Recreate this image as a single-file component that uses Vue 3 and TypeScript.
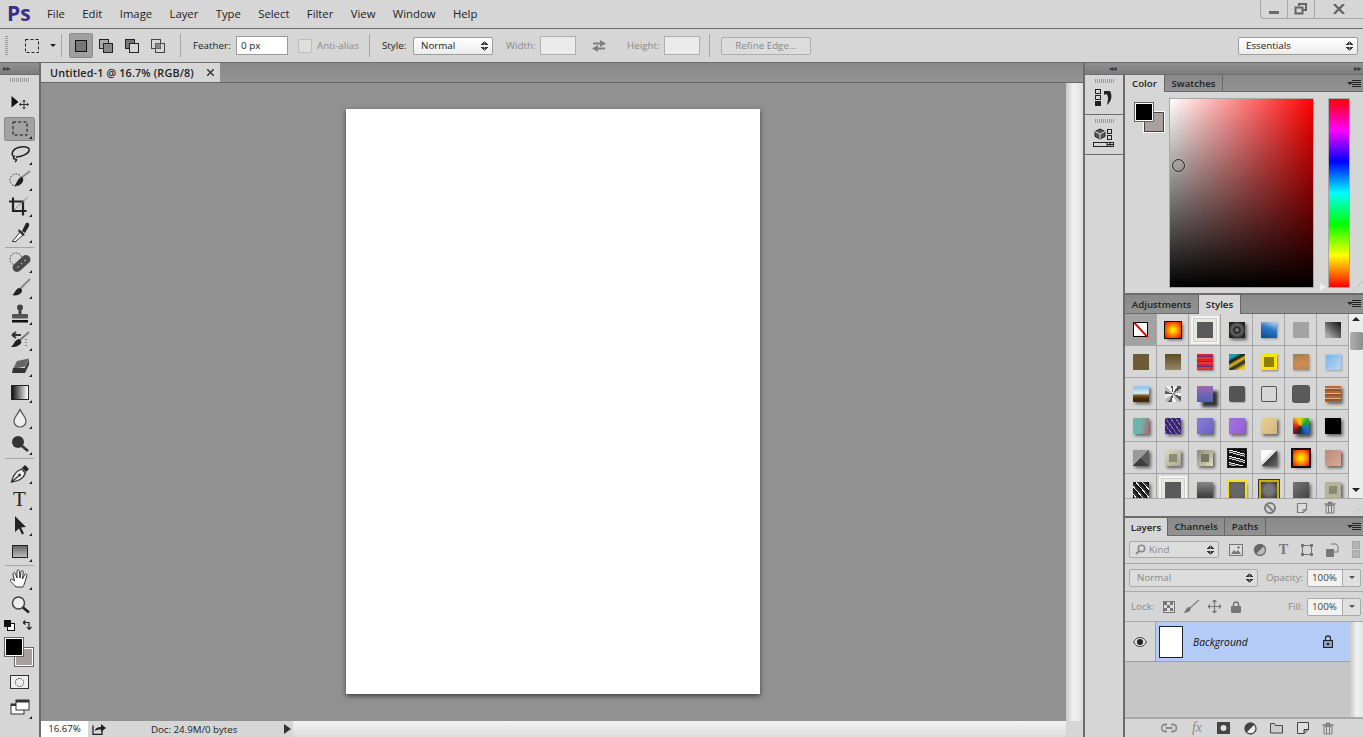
<script setup lang="ts">
interface StyleCell {
  bg: string
  shadow?: string
  radius?: string
}

const menus: string[] = ['File', 'Edit', 'Image', 'Layer', 'Type', 'Select', 'Filter', 'View', 'Window', 'Help']
const sh = '2px 2px 3px rgba(0,0,0,.55)'
const noise = 'repeating-linear-gradient(15deg,#222 0 1px,#ccc 1px 2px,#444 2px 3px,#eee 3px 4px,#111 4px 6px)'
const pyramid = (a: string, b: string, c: string) =>
  `linear-gradient(135deg,${a} 50%,transparent 50%),linear-gradient(45deg,${b} 50%,${c} 50%)`

const cells: StyleCell[] = [
  { bg: '#fff' },
  { bg: 'radial-gradient(circle,#ffee00 10%,#ff8a00 45%,#ee1c00 90%)', shadow: '0 0 0 1px #111,' + sh },
  { bg: '#5a5a5a', shadow: '0 0 0 3px #e8e8e0,0 0 0 4px #cfcfcf,0 0 0 6px #f4f4ee' },
  { bg: 'radial-gradient(circle,#777 10%,#222 25%,#666 45%,#222 75%)', shadow: sh },
  { bg: 'linear-gradient(200deg,#9cc6ee 10%,#2d74c0 45%,#0d4a94 100%)', shadow: '1px 1px 2px rgba(0,0,0,.3)' },
  { bg: '#a3a3a3' },
  { bg: 'linear-gradient(45deg,#aaa 15%,#666 50%,#222 90%)' },
  { bg: '#6b5b36' },
  { bg: 'linear-gradient(#5e4d22,#93866a)' },
  { bg: 'repeating-linear-gradient(#d81f3c 0 2px,#6b2a6e 2px 3px,#e23a30 3px 5px)', shadow: '1px 1px 2px rgba(0,0,0,.4)' },
  { bg: 'linear-gradient(150deg,#1a9fb5 20%,#111 35%,#e3c21c 50%,#222 65%,#e8d020 85%)' },
  { bg: 'linear-gradient(#8c8200,#8c8200) center / 10px 10px no-repeat,#ffe600', shadow: '1px 1px 2px rgba(0,0,0,.4)' },
  { bg: 'linear-gradient(170deg,#9a8358,#d58a4e 60%,#a38c6c)', shadow: '1px 1px 2px rgba(0,0,0,.3)' },
  { bg: 'linear-gradient(135deg,#73b2e4,#bcd9f5)', shadow: 'inset 0 0 0 1px #a9cbef,1px 1px 2px rgba(0,0,0,.25)' },
  { bg: 'linear-gradient(#8fcaf0 10%,#d9ecf7 45%,#7b5718 60%,#3d2a0a 80%)', shadow: sh },
  { bg: 'repeating-conic-gradient(#eee 0 8%,#555 8% 15%,#bbb 15% 22%)' },
  { bg: 'linear-gradient(#9a6ab2,#5060b0)', shadow: '5px 5px 3px rgba(0,0,0,.75)' },
  { bg: '#555', radius: '2px', shadow: '1px 1px 1px rgba(0,0,0,.2)' },
  { bg: 'transparent', radius: '2px', shadow: 'inset 0 0 0 1px #555' },
  { bg: '#5a5a5a', radius: '2px', shadow: '0 0 0 1px #555' },
  { bg: 'repeating-linear-gradient(#b5693a 0 2px,#d8b08c 2px 3px,#97552b 3px 5px)', shadow: sh },
  { bg: 'linear-gradient(100deg,#6fb3ad 50%,#b0686a)', shadow: sh },
  { bg: 'repeating-linear-gradient(55deg,#2d1f5e 0 1px,#8a70c4 1px 2px,#3e2a72 2px 4px)', shadow: sh },
  { bg: 'linear-gradient(135deg,#8b80d4,#6a60c2)', shadow: sh },
  { bg: 'linear-gradient(135deg,#a673e0,#8f5fd4)', shadow: sh },
  { bg: 'linear-gradient(135deg,#ead08a,#cdb884)', shadow: sh },
  { bg: 'conic-gradient(from 200deg,#222,#e81c1c,#f4d800,#18a83a,#1a68d8,#222)', shadow: '3px 3px 4px rgba(0,0,0,.7)' },
  { bg: '#000', shadow: sh },
  { bg: pyramid('#9a9a9a', '#3e3e3e', '#5e5e5e'), shadow: sh },
  { bg: 'linear-gradient(#8c8c7c,#8c8c7c) center / 8px 8px no-repeat,linear-gradient(135deg,#d8d8c0,#a8a890)', shadow: sh },
  { bg: 'linear-gradient(#777768,#777768) center / 8px 8px no-repeat,linear-gradient(135deg,#8a8a78,#dcdcc0)', shadow: sh },
  { bg: noise, shadow: '0 0 0 1px #000,0 0 0 2px #222' },
  { bg: 'linear-gradient(135deg,#fafafa 35%,#cfcfcf 50%,#3a3a3a 51%,#666)', shadow: sh },
  { bg: 'radial-gradient(circle,#ffe600 10%,#ff8a00 50%,#f01c00 90%)', shadow: '0 0 0 2px #111,' + sh },
  { bg: 'linear-gradient(135deg,#b98a78,#d8aa98)', shadow: sh },
  { bg: 'repeating-linear-gradient(50deg,#111 0 2px,#eee 2px 3px,#333 3px 5px)', shadow: sh },
  { bg: '#5a5a5a', shadow: '0 0 0 3px #e8e8e0,0 0 0 4px #cfcfcf,0 0 0 6px #f4f4ee' },
  { bg: 'linear-gradient(#888,#3a3a3a)', shadow: sh },
  { bg: 'radial-gradient(circle,#666 55%,#555)', shadow: '0 0 0 2px #efe21a,' + sh },
  { bg: 'radial-gradient(circle,#777 40%,#333)', shadow: '0 0 0 2px #c8b400,0 0 0 3px #333' },
  { bg: 'linear-gradient(135deg,#777,#444)', shadow: sh },
  { bg: 'linear-gradient(#8a8a72,#8a8a72) center / 8px 8px no-repeat,#b5b59a', shadow: sh },
]
</script>

<template>
  <div class="app">
    <header class="menubar">
      <span class="logo">Ps</span>
      <nav class="menus">
        <span v-for="m in menus" :key="m">{{ m }}</span>
      </nav>
      <div class="winctl">
        <span class="wbtn"><svg width="12" height="12" viewBox="0 0 12 12"><rect x="1" y="8" width="10" height="3" fill="#6a6a6a" /></svg></span>
        <span class="wbtn"><svg width="14" height="12" viewBox="0 0 14 12"><path d="M5 3V1h7v6h-3M1.500 4.500h7v6h-7z" fill="none" stroke="#666" stroke-width="2" /></svg></span>
        <span class="wbtn wclose"><svg width="12" height="10" viewBox="0 0 12 10"><path d="M1 0l10 10M11 0L1 10" stroke="#666" stroke-width="2.400" /></svg></span>
      </div>
    </header>

    <section class="options">
      <span class="grip-v"></span>
      <svg class="o-marq" width="14" height="14" viewBox="0 0 14 14"><rect x=".5" y=".5" width="13" height="13" fill="none" stroke="#222" stroke-dasharray="3 2" /></svg>
      <span class="o-caret"></span>
      <span class="o-sep o-sep1"></span>
      <span class="seg seg-on"><svg width="12" height="12" viewBox="0 0 12 12"><rect x=".5" y=".5" width="11" height="11" fill="#777" stroke="#111" /></svg></span>
      <span class="seg"><svg width="14" height="14" viewBox="0 0 14 14"><rect x=".5" y=".5" width="9" height="9" fill="#aaa" stroke="#222" /><rect x="4.500" y="4.500" width="9" height="9" fill="#888" stroke="#222" /></svg></span>
      <span class="seg"><svg width="14" height="14" viewBox="0 0 14 14"><rect x=".5" y=".5" width="9" height="9" fill="#777" stroke="#222" /><rect x="4.500" y="4.500" width="9" height="9" fill="#d6d6d6" stroke="#222" /></svg></span>
      <span class="seg"><svg width="14" height="14" viewBox="0 0 14 14"><rect x=".5" y=".5" width="9" height="9" fill="none" stroke="#444" /><rect x="4.500" y="4.500" width="9" height="9" fill="none" stroke="#444" /><rect x="4.500" y="4.500" width="5" height="5" fill="#888" /></svg></span>
      <span class="o-sep o-sep2"></span>
      <span class="lbl l-feather">Feather:</span>
      <span class="field f-feather">0 px</span>
      <span class="check"></span>
      <span class="lbl off l-anti">Anti-alias</span>
      <span class="o-sep o-sep3"></span>
      <span class="lbl l-style">Style:</span>
      <span class="sel s-style">Normal<i class="updown"></i></span>
      <span class="lbl off l-width">Width:</span>
      <span class="field blank"></span>
      <span class="swap"><svg width="16" height="14" viewBox="0 0 16 14"><path d="M2 3.500h7V1l6 3.500L9 8V5.500H2zM14 8.500H7V6L1 9.500 7 13v-2.500h7z" fill="#808080" /></svg></span>
      <span class="lbl off l-height">Height:</span>
      <span class="field blank"></span>
      <span class="o-sep o-sep4"></span>
      <span class="refine">Refine Edge...</span>
      <span class="sel s-ess">Essentials<i class="updown"></i></span>
    </section>

    <main class="work">
      <aside class="toolbar">
        <div class="strip"><span class="dbl">▸▸</span></div>
        <span class="grip-h tgrip"></span>
        <div class="tools">
          <div class="tool"><svg viewBox="0 0 24 24"><path d="M3.500 6v11.500l7-5.500z" fill="#111" /><path d="M16 10v9M11.500 14.500h9M14.500 11.500L16 10l1.500 1.500M14.500 17.500L16 19l1.500-1.500M13 13l-1.500 1.500L13 16M19 13l1.500 1.500L19 16" fill="none" stroke="#333" /></svg></div>
          <div class="tool more on"><i class="hl"></i><svg viewBox="0 0 24 24"><rect x="5" y="6" width="14" height="13" fill="none" stroke="#111" stroke-dasharray="3 2.200" /></svg></div>
          <div class="tool more"><svg viewBox="0 0 24 24"><path d="M6 15c-4-3-1-9 7-10 6-.7 9 1 8 4-1 3-8 6-13 6" fill="none" stroke="#222" stroke-width="1.500" /><path d="M7 14c-2 1-2 3 0 3s2 1 0 3" fill="none" stroke="#222" stroke-width="1.500" /></svg></div>
          <div class="tool more"><svg viewBox="0 0 24 24"><circle cx="8" cy="12" r="6" fill="none" stroke="#222" stroke-dasharray="1.500 1.500" /><path d="M22 3l-9 7" stroke="#888" stroke-width="1.800" /><path d="M14 9c3 2 1 9-8 9 3-2 3-8 8-9z" fill="#222" /></svg></div>
          <div class="tool more"><svg viewBox="0 0 24 24"><path d="M5 3.500v13.500h13.500M1 7.500h14v14" fill="none" stroke="#222" stroke-width="2.200" /><path d="M6 16L20 3" stroke="#888" /></svg></div>
          <div class="tool more"><svg viewBox="0 0 24 24"><path d="M5 21l-1 1 9-11 3 3-9 8z" fill="#fff" stroke="#333" /><path d="M11 9l6 6-2 1-5-5z" fill="#333" /><path d="M14 11l4-8c2-1 4 1 3 3l-4 7z" fill="#222" /></svg></div>
          <i class="tsep"></i>
          <div class="tool more"><svg viewBox="0 0 24 24"><circle cx="8" cy="9" r="6" fill="none" stroke="#333" stroke-dasharray="1.500 1.500" /><rect x="3" y="9" width="21" height="9" rx="4.500" transform="rotate(-42 13.500 13.500)" fill="#4a4a4a" /><circle cx="10" cy="17" r="1" fill="#999" /><circle cx="13.500" cy="13.500" r="1" fill="#999" /><circle cx="17" cy="10.500" r="1" fill="#999" /></svg></div>
          <div class="tool more"><svg viewBox="0 0 24 24"><path d="M22 3l-10 10" stroke="#888" stroke-width="1.800" /><path d="M11 12c3 0 4 3 2 5-1.500 2-6 3-9 2 3-1 3-6 7-7z" fill="#222" /></svg></div>
          <div class="tool more"><svg viewBox="0 0 24 24"><circle cx="12" cy="5.500" r="3" fill="#444" /><path d="M10.500 7h3v5h-3z" fill="#444" /><rect x="4" y="12" width="16" height="4.500" rx="1" fill="#555" /><rect x="4" y="18" width="16" height="2.500" fill="#111" /></svg></div>
          <div class="tool more"><svg viewBox="0 0 24 24"><path d="M4 7h9M4 7l4-3M4 7l4 3" fill="none" stroke="#333" stroke-width="1.800" /><path d="M21 4l-9 8" stroke="#777" stroke-width="1.800" /><path d="M11 11c3 1 3 5 0 6-2 2-5 2-8 2 3-2 3-7 8-8z" fill="#222" /><path d="M18 11v8" stroke="#333" stroke-dasharray="1 2" /></svg></div>
          <div class="tool more"><svg viewBox="0 0 24 24"><path d="M9 7l12-2.500-4 8L5 15z" fill="#666" /><path d="M5 14h12v5H4z" fill="#333" /><path d="M17 13l4-8v6l-4 8z" fill="#444" /></svg></div>
          <div class="tool more"><span class="grad"></span></div>
          <div class="tool more"><svg viewBox="0 0 24 24"><path d="M12 3c1 4 6 8 6 12a6 6 0 0 1-12 0c0-4 5-8 6-12z" fill="#eee" stroke="#555" stroke-width="1.200" /></svg></div>
          <div class="tool more"><svg viewBox="0 0 24 24"><circle cx="10" cy="10" r="6" fill="#333" /><path d="M14 14l6 5" stroke="#333" stroke-width="2.500" /></svg></div>
          <i class="tsep tsep2"></i>
          <div class="tool more"><svg viewBox="0 0 24 24"><path d="M3.500 21c1-5 3-10 10-13l4 4c-3 7-8 8-14 9zM3.500 21l7-6" fill="#eee" stroke="#333" stroke-width="1.300" /><circle cx="11.500" cy="14" r="1.500" fill="#333" /><path d="M14 7l3-3 4 4-3 3z" fill="#222" /></svg></div>
          <div class="tool more"><span class="ttype">T</span></div>
          <div class="tool more"><svg viewBox="0 0 24 24"><path d="M7 3l11 11-5 .5 3 6-2 1-3-6-4 3.500z" fill="#222" /></svg></div>
          <div class="tool more"><span class="trect"></span></div>
          <i class="tsep tsep3"></i>
          <div class="tool more"><svg viewBox="0 0 24 24"><path d="M8 20c-2-3-6-5-5.500-7s2.500 0 4 1L5 7c0-2 2-2 2.500 0L9 11 9 4.500c0-2 2.500-2 2.500 0L12 11l1-6c.3-2 2.500-1.800 2.300.2L14.500 12l2-4c.7-1.800 3-1 2.300.8L17 15c-1 3-2 5-2 5z" fill="#fff" stroke="#333" /></svg></div>
          <div class="tool"><svg viewBox="0 0 24 24"><circle cx="10.500" cy="10" r="6" fill="#eee" stroke="#444" stroke-width="1.500" /><path d="M15 14.500l6 5" stroke="#222" stroke-width="2.600" /></svg></div>
          <div class="minis">
            <svg width="11" height="11" viewBox="0 0 11 11"><rect x="3.500" y="3.500" width="7" height="7" fill="#fff" stroke="#111" /><rect x="0" y="0" width="7" height="7" fill="#111" /></svg>
            <svg width="11" height="12" viewBox="0 0 11 12"><path d="M1 2.500h6v6M1 2.500l2.500-2M1 2.500l2.500 2M7 9.500l-2-2.500M7 9.500l2.500-2.500" fill="none" stroke="#222" stroke-width="1.200" /></svg>
          </div>
          <div class="tcolors">
            <span class="tbg"></span>
            <span class="tfg"></span>
          </div>
          <div class="tool tmask"><span class="maskbox"><i></i></span></div>
          <div class="tool more"><svg viewBox="0 0 24 24"><rect x="3" y="8" width="13" height="10" fill="#fff" stroke="#333" /><rect x="3" y="8" width="13" height="2" fill="#333" /><rect x="8" y="4" width="13" height="10" fill="#fff" stroke="#333" /><rect x="8" y="4" width="13" height="2.500" fill="#333" /></svg></div>
        </div>
      </aside>

      <section class="doc">
        <div class="doctabs">
          <div class="doctab">
            <span>Untitled-1 @ 16.7% (RGB/8)</span>
            <svg width="7" height="7" viewBox="0 0 7 7"><path d="M0 0l7 7M7 0L0 7" stroke="#333" stroke-width="1.400" /></svg>
          </div>
        </div>
        <div class="docmain">
          <div class="canvasarea">
            <div class="page"></div>
          </div>
          <div class="vscroll"></div>
        </div>
        <div class="status">
          <span class="zoomv">16.67%</span>
          <svg class="share" width="14" height="12" viewBox="0 0 14 12"><path d="M1 2.500v9h9V7" fill="none" stroke="#222" stroke-width="1.300" /><path d="M3 8c0-3 3-4 6-4V1l5 4-5 4V6.500C6 6.500 4 7 3 8z" fill="#222" /></svg>
          <span class="docinfo">Doc: 24.9M/0 bytes</span>
          <i class="statarrow"></i>
          <span class="hscroll"></span>
          <span class="corner"></span>
        </div>
      </section>

      <aside class="right">
        <div class="strip rstrip"><span class="dbl">◂◂</span><span class="dbl">▸▸</span></div>
        <div class="rbody">
          <div class="dock">
            <div class="dockitem">
              <span class="grip-h"></span>
              <svg width="22" height="20" viewBox="0 0 22 20"><rect x="2.500" y="1.500" width="5" height="4" fill="none" stroke="#222" /><rect x="2.500" y="7.500" width="5" height="4" fill="none" stroke="#222" /><rect x="2" y="13" width="6" height="5" fill="#222" /><path d="M11 3h6c3 5 1 11-3 14 1-5 2-9-1-11l-2 1z" fill="#222" /></svg>
            </div>
            <div class="dockitem">
              <span class="grip-h"></span>
              <svg width="24" height="20" viewBox="0 0 24 20"><path d="M8 1l5 2.500v5L8 11 3 8.500v-5z" fill="#555" stroke="#222" /><path d="M3 3.500L8 6l5-2.500M8 6v5" stroke="#ddd" fill="none" /><rect x="15.500" y="1.500" width="4" height="4" fill="none" stroke="#222" /><rect x="15.500" y="7.500" width="4" height="4" fill="none" stroke="#222" /><rect x="1.500" y="14.500" width="20" height="4" fill="none" stroke="#222" /><path d="M15 14.500v4M15 16.500h6M18 14.500v4" stroke="#222" /></svg>
            </div>
          </div>

          <div class="panels">
            <div class="tabs h-color">
              <span class="tab on t-color">Color</span>
              <span class="tab t-swatch">Swatches</span>
              <i class="pmenu"></i>
            </div>
            <div class="colorbody">
              <div class="swatches">
                <span class="cbg"></span>
                <span class="cfg"></span>
              </div>
              <div class="sv"><i class="svcursor"></i></div>
              <div class="hue"></div>
              <i class="tri"></i>
              <i class="resize"></i>
            </div>

            <div class="tabs h-adj">
              <span class="tab t-adj">Adjustments</span>
              <span class="tab on t-styles">Styles</span>
              <i class="pmenu"></i>
            </div>
            <div class="stylesbody">
              <div class="stylegrid">
                <div v-for="(c, i) in cells" :key="i" class="cell" :class="{ none: i === 0 }">
                  <span class="sw" :style="{ background: c.bg, boxShadow: c.shadow, borderRadius: c.radius }"></span>
                </div>
              </div>
              <div class="vbar">
                <i class="up"></i>
                <i class="thumb"></i>
                <i class="dn"></i>
              </div>
            </div>
            <div class="pfoot sfoot">
              <svg width="14" height="14" viewBox="0 0 14 14"><circle cx="7" cy="7" r="5" fill="none" stroke="#7c7c7c" stroke-width="2" /><path d="M3.500 3.500l7 7" stroke="#7c7c7c" stroke-width="2" /></svg>
              <svg class="s-new" width="12" height="12" viewBox="0 0 12 12"><path d="M1.500 1.500h9v6l-3 3h-6z" fill="#ddd" stroke="#7c7c7c" stroke-width="1.200" /><path d="M7 11V7.500h4" fill="none" stroke="#7c7c7c" /></svg>
              <svg class="s-trash" width="12" height="13" viewBox="0 0 12 13"><path d="M4 1.500h4M.5 3h11" stroke="#7c7c7c" stroke-width="1.500" /><path d="M2 4.500h8V12H2z" fill="#d6d6d6" stroke="#7c7c7c" /><path d="M4.500 5v7M7.500 5v7" stroke="#7c7c7c" /></svg>
              <i class="resize foot"></i>
            </div>

            <div class="tabs h-layers">
              <span class="tab on t-layers">Layers</span>
              <span class="tab t-channels">Channels</span>
              <span class="tab t-paths">Paths</span>
              <i class="pmenu"></i>
            </div>
            <div class="lrow lkind">
              <span class="sel s-kind"><svg width="11" height="11" viewBox="0 0 11 11"><circle cx="6.500" cy="4.500" r="3.200" fill="none" stroke="#8a8a8a" stroke-width="1.500" /><path d="M4 7l-3 3" stroke="#8a8a8a" stroke-width="2" /></svg>Kind<i class="updown"></i></span>
              <svg class="k-ic k1" width="14" height="12" viewBox="0 0 14 12"><rect x=".5" y=".5" width="13" height="11" fill="#ddd" stroke="#777" /><path d="M2 10l3-4 2 2 2-2 3 4z" fill="#777" /><circle cx="9.500" cy="3.500" r="1.200" fill="#777" /></svg>
              <svg class="k-ic k2" width="14" height="14" viewBox="0 0 14 14"><circle cx="7" cy="7" r="5.500" fill="#bbb" stroke="#777" stroke-width="1.500" /><path d="M3 11l8-8A5.500 5.500 0 0 0 3 11z" fill="#666" /></svg>
              <span class="k-t k3">T</span>
              <svg class="k-ic k4" width="14" height="14" viewBox="0 0 14 14"><rect x="2.500" y="2.500" width="9" height="9" fill="none" stroke="#777" /><rect x="1" y="1" width="3" height="3" fill="#777" /><rect x="10" y="1" width="3" height="3" fill="#777" /><rect x="1" y="10" width="3" height="3" fill="#777" /><rect x="10" y="10" width="3" height="3" fill="#777" /></svg>
              <svg class="k-ic k5" width="14" height="14" viewBox="0 0 14 14"><path d="M6 1h5l2 2v6H9" fill="none" stroke="#777" /><rect x="1.500" y="6.500" width="7" height="7" fill="#777" stroke="#777" /></svg>
              <span class="ktoggle"><i></i><i></i></span>
            </div>
            <div class="lrow lblend">
              <span class="sel s-normal">Normal<i class="updown"></i></span>
              <span class="lbl off l-op">Opacity:</span>
              <span class="numfield">100%<i></i></span>
            </div>
            <div class="lrow llock">
              <span class="lbl off l-lock">Lock:</span>
              <svg class="k-ic lk1" width="12" height="12" viewBox="0 0 12 12"><rect x=".5" y=".5" width="11" height="11" fill="#ddd" stroke="#777" /><path d="M1 1h3v3H1zM7 1h3v3H7zM4 4h3v3H4zM1 7h3v3H1zM7 7h3v3H7z" fill="#777" /></svg>
              <svg class="k-ic lk2" width="18" height="14" viewBox="0 0 18 14"><path d="M17 0L8 8" stroke="#888" stroke-width="1.500" /><path d="M8 7c2 2 0 6-7 6 3-1 2-6 7-6z" fill="#777" /></svg>
              <svg class="k-ic lk3" width="13" height="13" viewBox="0 0 13 13"><path d="M6.500 0v13M0 6.500h13M4.500 2l2-2 2 2M4.500 11l2 2 2-2M2 4.500l-2 2 2 2M11 4.500l2 2-2 2" fill="none" stroke="#777" stroke-width="1.200" /></svg>
              <svg class="k-ic lk4" width="10" height="12" viewBox="0 0 10 12"><path d="M2.500 5V3.500a2.500 2.500 0 0 1 5 0V5" fill="none" stroke="#777" stroke-width="1.500" /><rect y="5" width="10" height="7" rx="1" fill="#777" /></svg>
              <span class="lbl off l-fill">Fill:</span>
              <span class="numfield">100%<i></i></span>
            </div>
            <div class="layerlist">
              <div class="layers">
                <div class="layer">
                  <span class="eye"><svg width="14" height="10" viewBox="0 0 14 10"><path d="M.5 5C3 1 5 .5 7 .5S11 1 13.500 5C11 9 9 9.500 7 9.500S3 9 .5 5z" fill="#ddd" stroke="#333" /><circle cx="7" cy="5" r="3" fill="#222" /></svg></span>
                  <span class="layersel">
                    <span class="thumbl"></span>
                    <em>Background</em>
                    <svg class="layerlock" width="10" height="13" viewBox="0 0 10 13"><path d="M2.500 5.500V3.500a2.500 2.500 0 0 1 5 0v2" fill="none" stroke="#333" stroke-width="1.300" /><rect x=".5" y="5.500" width="9" height="7" fill="#8ea0c0" stroke="#222" /><rect x="4" y="8" width="2" height="2" fill="#222" /></svg>
                  </span>
                </div>
              </div>
              <div class="lscroll"></div>
            </div>
            <div class="pfoot lfoot">
              <svg width="16" height="10" viewBox="0 0 16 10"><path d="M6 1.500H4a3.500 3.500 0 0 0 0 7h2M10 1.500h2a3.500 3.500 0 0 1 0 7h-2M4.500 5h7" fill="none" stroke="#8a8a8a" stroke-width="1.800" /></svg>
              <span class="fx">fx</span>
              <svg width="13" height="12" viewBox="0 0 13 12"><rect width="13" height="12" fill="#444" /><circle cx="6.500" cy="6" r="3" fill="#ddd" /></svg>
              <svg width="13" height="13" viewBox="0 0 13 13"><circle cx="6.500" cy="6.500" r="5.500" fill="#eee" stroke="#444" stroke-width="1.300" /><path d="M2.500 10.500l8-8a5.500 5.500 0 0 0-8 8z" fill="#444" /></svg>
              <svg width="13" height="12" viewBox="0 0 13 12"><path d="M.5 11V1.500h4l1 2h7V11z" fill="#ccc" stroke="#444" /></svg>
              <svg width="12" height="12" viewBox="0 0 12 12"><path d="M.5.500h11v7l-4 4h-7z" fill="#ddd" stroke="#444" /><path d="M7 12V7.500h5" fill="#999" stroke="#444" /></svg>
              <svg width="12" height="13" viewBox="0 0 12 13"><path d="M4 1.500h4M.5 3h11" stroke="#7c7c7c" stroke-width="1.500" /><path d="M2 4.500h8V12H2z" fill="#d6d6d6" stroke="#7c7c7c" /><path d="M4.500 5v7M7.500 5v7" stroke="#7c7c7c" /></svg>
            </div>
          </div>
        </div>
      </aside>
    </main>
  </div>
</template>

<style scoped>
.app {
  width: 1363px;
  height: 737px;
  display: flex;
  flex-direction: column;
  overflow: hidden;
  background: #d6d6d6;
  color: #222;
  font-family: "Open Sans", "Noto Sans", sans-serif;
  font-size: 9.800px;
}
svg { display: block; flex: none; }
i { display: block; }

/* menu bar */
.menubar {
  height: 28px;
  flex: none;
  display: flex;
  align-items: flex-start;
  border-bottom: 1px solid #6c6c6c;
}
.logo {
  width: 47px;
  padding-left: 7px;
  box-sizing: border-box;
  font: 700 21px/27px "Open Sans", sans-serif;
  color: #3d2f88;
}
.menus {
  display: flex;
  gap: 17.400px;
  font-size: 11.300px;
  line-height: 28px;
}
.winctl {
  margin-left: auto;
  display: flex;
  height: 18px;
  border: 1px solid #a8a8a8;
  border-top: 0;
  border-right: 0;
  border-radius: 0 0 0 4px;
}
.wbtn {
  width: 27px;
  display: flex;
  align-items: center;
  justify-content: center;
  border-right: 1px solid #a8a8a8;
  box-sizing: border-box;
}
.wclose { width: 48px; border-right: 0; }

/* options bar */
.options {
  height: 33px;
  flex: none;
  display: flex;
  align-items: center;
  padding-left: 5px;
  padding-right: 5px;
  border-bottom: 1px solid #6c6c6c;
  box-sizing: content-box;
}
.grip-v {
  width: 3px;
  height: 19px;
  background: repeating-linear-gradient(#9a9a9a 0 1px, transparent 1px 2px);
}
.o-marq { margin-left: 17px; }
.o-caret {
  margin-left: 11px;
  width: 0;
  height: 0;
  border: 3px solid transparent;
  border-top: 3px solid #222;
  border-bottom: 0;
}
.o-sep { width: 1px; height: 23px; background: #a4a4a4; flex: none; }
.o-sep1 { margin-left: 5px; }
.o-sep2 { margin-left: 9px; }
.o-sep3 { margin-left: 7px; }
.o-sep4 { margin-left: 9px; }
.seg {
  width: 26px;
  height: 25px;
  display: flex;
  align-items: center;
  justify-content: center;
  flex: none;
}
.seg-on {
  width: 24px;
  margin-left: 7px;
  background: #a0a0a0;
  border: 1px solid #8c8c8c;
  border-radius: 2px;
  box-sizing: border-box;
}
.lbl { flex: none; white-space: nowrap; }
.off { color: #8a8a8a; }
.l-feather { margin-left: 12px; width: 43px; }
.field {
  height: 19px;
  line-height: 17px;
  box-sizing: border-box;
  background: #fff;
  border: 1px solid #9c9c9c;
  padding-left: 4px;
  flex: none;
}
.f-feather { width: 52px; }
.field.blank { width: 36px; background: #ebebeb; border-color: #b0b0b0; }
.check {
  margin-left: 10px;
  width: 14px;
  height: 14px;
  box-sizing: border-box;
  border: 1px solid #bbb;
  border-radius: 2px;
  background: #dedede;
}
.l-anti { margin-left: 5px; width: 45px; }
.l-style { margin-left: 12px; width: 31px; }
.sel {
  position: relative;
  height: 18px;
  line-height: 16px;
  box-sizing: border-box;
  border: 1px solid #9c9c9c;
  border-radius: 2px;
  background: linear-gradient(#fff, #ececec);
  padding-left: 7px;
  flex: none;
}
.s-style { width: 80px; }
.s-ess { width: 120px; margin-left: auto; padding-left: 7px; }
.updown {
  position: absolute;
  right: 4px;
  top: 3px;
  width: 7px;
  height: 10px;
  background:
    linear-gradient(to bottom right, transparent 50%, #333 50%) 0 0 / 3.500px 4px no-repeat,
    linear-gradient(to bottom left, transparent 50%, #333 50%) 3.500px 0 / 3.500px 4px no-repeat,
    linear-gradient(to top right, transparent 50%, #333 50%) 0 6px / 3.500px 4px no-repeat,
    linear-gradient(to top left, transparent 50%, #333 50%) 3.500px 6px / 3.500px 4px no-repeat;
}
.l-width { margin-left: 13px; width: 34px; }
.swap { width: 46px; display: flex; justify-content: center; flex: none; }
.l-height { margin-left: 5px; width: 37px; }
.refine {
  margin-left: 11px;
  width: 90px;
  height: 18px;
  line-height: 16px;
  box-sizing: border-box;
  text-align: center;
  color: #8a8a8a;
  border: 1px solid #aeaeae;
  border-radius: 2px;
  background: #dcdcdc;
  flex: none;
}

/* workspace */
.work { flex: 1; display: flex; min-height: 0; }
.toolbar {
  width: 39px;
  flex: none;
  border-right: 2px solid #6c6c6c;
  display: flex;
  flex-direction: column;
}
.strip {
  height: 11px;
  flex: none;
  background: linear-gradient(#909090, #7d7d7d);
  border-bottom: 1px solid #6c6c6c;
  display: flex;
  align-items: center;
  justify-content: space-between;
  color: #333;
  padding: 0 3px;
  box-sizing: content-box;
}
.dbl { font: 8px/11px "DejaVu Sans", sans-serif; letter-spacing: -.5px; color: #3a3a3a; }
.grip-h {
  width: 19px;
  height: 4px;
  display: block;
  background: repeating-linear-gradient(to right, #9a9a9a 0 1px, transparent 1px 2px);
}
.tgrip { margin: 3px auto 0; flex: none; }
.tools { margin-top: 7px; display: flex; flex-direction: column; }
.tool {
  position: relative;
  height: 26px;
  width: 39px;
  display: flex;
  align-items: center;
  justify-content: center;
}
.tool svg { width: 24px; height: 24px; position: relative; }
.tool.more::after {
  content: "";
  position: absolute;
  right: 7px;
  bottom: 2px;
  width: 0;
  height: 0;
  border-left: 3px solid transparent;
  border-bottom: 3px solid #222;
}
.hl {
  position: absolute;
  left: 4px;
  top: 2px;
  width: 31px;
  height: 24px;
  box-sizing: border-box;
  background: #a2a2a2;
  border: 1px solid #8a8a8a;
  border-radius: 2px;
}
.tsep {
  height: 1px;
  width: 29px;
  margin: 2px 5px 1px;
  background: #a4a4a4;
}
.tsep2 { margin: 1px 5px; }
.tsep3 { margin: 1px 5px 0; }
.grad {
  width: 16px;
  height: 13px;
  border: 1px solid #222;
  background: linear-gradient(to right, #111, #fff);
}
.ttype { font: 400 21px/26px "Liberation Serif", serif; color: #222; }
.trect {
  width: 14px;
  height: 11px;
  border: 1px solid #222;
  background: linear-gradient(#666, #bbb);
}
.minis { height: 15px; display: flex; align-items: center; justify-content: space-between; padding: 0 6px 0 4px; }
.tcolors { position: relative; height: 37px; margin-top: 4px; }
.tfg, .tbg { position: absolute; width: 20px; height: 20px; box-sizing: border-box; }
.tfg { left: 4px; top: 0; background: #000; border: 1px solid #666; box-shadow: inset 0 0 0 1px #fff; }
.tbg { left: 14px; top: 10px; background: #a99f9f; border: 1px solid #666; box-shadow: inset 0 0 0 1px #fff; }
.tmask { height: 26px; margin-top: -5px; }
.maskbox {
  width: 17px;
  height: 12px;
  border: 1px solid #333;
  background: #eee;
  display: flex;
  align-items: center;
  justify-content: center;
}
.maskbox i { width: 7px; height: 7px; border: 1px dotted #222; border-radius: 50%; }

/* document */
.doc { width: 1042px; flex: none; display: flex; flex-direction: column; }
.doctabs {
  height: 19px;
  flex: none;
  background: linear-gradient(#8a8a8a, #939393);
  border-bottom: 1px solid #666;
  box-sizing: content-box;
  display: flex;
}
.doctab {
  width: 179px;
  background: #d6d6d6;
  display: flex;
  align-items: center;
  justify-content: space-between;
  padding: 0 6px 0 9px;
  box-sizing: border-box;
  font-size: 10.800px;
  font-weight: 600;
  letter-spacing: .15px;
}
.docmain { flex: 1; display: flex; min-height: 0; }
.canvasarea {
  flex: 1;
  background: #919191;
  display: flex;
  justify-content: flex-start;
  padding: 26px 0 0 305px;
}
.page {
  width: 414px;
  height: 585px;
  background: #fff;
  box-shadow: 0 2px 5px rgba(0, 0, 0, .55);
}
.vscroll {
  width: 17px;
  flex: none;
  background: linear-gradient(to right, #c9c9c9, #f2f2f2 45%, #dedede);
}
.status {
  height: 16px;
  flex: none;
  display: flex;
  align-items: center;
  background: #d6d6d6;
  font-size: 9.700px;
}
.zoomv {
  width: 47px;
  height: 16px;
  line-height: 16px;
  background: #fff;
  text-align: center;
  flex: none;
}
.share { margin-left: 4px; }
.docinfo { margin-left: 45px; width: 133px; flex: none; }
.statarrow {
  width: 0;
  height: 0;
  border: 5px solid transparent;
  border-left: 7px solid #333;
  border-right: 0;
}
.hscroll {
  flex: 1;
  height: 16px;
  margin-left: 2px;
  background: linear-gradient(#f2f2f2, #dcdcdc);
}
.corner { width: 17px; flex: none; }

/* right */
.right {
  flex: 1;
  border-left: 2px solid #6c6c6c;
  display: flex;
  flex-direction: column;
}
.rstrip { padding: 0 2px 0 24px; }
.rbody { flex: 1; display: flex; min-height: 0; }
.dock { width: 38px; flex: none; border-right: 2px solid #6c6c6c; box-sizing: content-box; }
.dockitem {
  height: 40px;
  border-bottom: 1px solid #6c6c6c;
  display: flex;
  flex-direction: column;
  align-items: center;
  padding-top: 4px;
  box-sizing: border-box;
  gap: 5px;
}
.panels { flex: 1; display: flex; flex-direction: column; min-width: 0; }
.tabs {
  flex: none;
  display: flex;
  position: relative;
  background: linear-gradient(#8a8a8a, #929292);
  border-bottom: 1px solid #6c6c6c;
  box-sizing: border-box;
  font-size: 9.700px;
  font-weight: 600;
}
.tab {
  display: flex;
  align-items: center;
  justify-content: center;
  box-sizing: border-box;
  border-right: 1px solid #666;
  color: #222;
}
.tab.on { background: #d6d6d6; margin-bottom: -1px; }
.h-color { height: 17px; }
.t-color { width: 40px; }
.t-swatch { width: 58px; }
.pmenu {
  position: absolute;
  right: 2px;
  top: 5px;
  width: 9px;
  height: 7px;
  background: repeating-linear-gradient(#222 0 1px, transparent 1px 2px);
}
.pmenu::before {
  content: "";
  position: absolute;
  left: -5px;
  top: 2px;
  border: 3px solid transparent;
  border-top: 3px solid #222;
  border-bottom: 0;
}
.colorbody {
  height: 203px;
  flex: none;
  position: relative;
  display: flex;
  padding: 7px 0 0 10px;
  box-sizing: border-box;
  border-bottom: 2px solid #6c6c6c;
}
.swatches { position: relative; width: 35px; flex: none; }
.cfg, .cbg { position: absolute; box-sizing: border-box; }
.cfg { left: -1px; top: 3px; width: 20px; height: 20px; background: #000; border: 1px solid #666; box-shadow: inset 0 0 0 1px #fff; }
.cbg { left: 8px; top: 12px; width: 22px; height: 22px; background: #a99f9f; border: 1px solid #fff; box-shadow: inset 0 0 0 1px #444; }
.sv {
  position: relative;
  width: 143px;
  height: 188px;
  flex: none;
  background:
    linear-gradient(to bottom, transparent, #000),
    linear-gradient(to right, #fff, #f00);
  outline: 1px solid #a8a8a8;
}
.svcursor {
  position: absolute;
  left: 2px;
  top: 60px;
  width: 11px;
  height: 11px;
  border-radius: 50%;
  border: 1px solid #222;
  box-shadow: 0 0 0 .5px rgba(255, 255, 255, .4);
}
.hue {
  margin-left: 16px;
  width: 20px;
  height: 188px;
  flex: none;
  outline: 1px solid #a8a8a8;
  background: linear-gradient(#f00, #f0f 16.700%, #00f 33.300%, #0ff 50%, #0f0 66.700%, #ff0 83.300%, #f00);
}
.tri {
  position: absolute;
  left: 195px;
  top: 191px;
  width: 0;
  height: 0;
  border: 4px solid transparent;
  border-left: 6px solid #eee;
  border-right: 0;
}
.resize {
  position: absolute;
  right: 1px;
  bottom: 2px;
  width: 9px;
  height: 9px;
  background:
    linear-gradient(135deg, transparent 50%, #d6d6d6 50%),
    repeating-linear-gradient(90deg, #777 0 1px, transparent 1px 2px);
  clip-path: polygon(100% 0, 100% 100%, 0 100%);
}
.h-adj { height: 19px; }
.t-adj { width: 74px; }
.t-styles { width: 42px; }
.stylesbody { height: 184px; flex: none; display: flex; overflow: hidden; }
.stylegrid {
  width: 224px;
  flex: none;
  display: grid;
  grid-template-columns: repeat(7, 32px);
  grid-auto-rows: 32px;
}
.cell {
  display: flex;
  align-items: center;
  justify-content: center;
  border-right: 1px solid #a4a4a4;
  border-bottom: 1px solid #a4a4a4;
  box-sizing: border-box;
}
.sw { width: 16px; height: 16px; display: block; }
.cell.none { background: #a2a2a2; }
.cell.none .sw {
  position: relative;
  width: 15px;
  height: 15px;
  border: 1px solid #000;
  box-sizing: border-box;
  overflow: visible;
}
.cell.none .sw::after {
  content: "";
  position: absolute;
  left: -3px;
  top: 6px;
  width: 20px;
  height: 2px;
  background: #d00;
  transform: rotate(47deg);
}
.vbar { flex: 1; position: relative; background: #ededed; }
.vbar .up, .vbar .dn {
  position: absolute;
  left: 3px;
  width: 0;
  height: 0;
  border: 4px solid transparent;
}
.vbar .up { top: 3px; border-bottom: 4px solid #222; border-top: 0; }
.vbar .dn { bottom: 6px; border-top: 4px solid #222; border-bottom: 0; }
.vbar .thumb {
  position: absolute;
  left: 1px;
  right: 0;
  top: 18px;
  height: 18px;
  background: linear-gradient(to right, #b0b0b0, #8d8d8d);
  border-radius: 2px;
}
.pfoot {
  position: relative;
  flex: none;
  display: flex;
  align-items: center;
  background: #d6d6d6;
}
.sfoot {
  height: 17px;
  border-top: 1px solid #a8a8a8;
  border-bottom: 2px solid #6c6c6c;
  box-sizing: content-box;
  padding-left: 138px;
}
.s-new { margin-left: 19px; }
.s-trash { margin-left: 16px; }
.resize.foot { bottom: 1px; }
.h-layers { height: 18px; }
.t-layers { width: 43px; }
.t-channels { width: 57px; }
.t-paths { width: 41px; }
.lrow {
  flex: none;
  display: flex;
  align-items: center;
  position: relative;
  border-bottom: 1px solid #a8a8a8;
  box-sizing: border-box;
}
.lkind { height: 28px; }
.lblend { height: 28px; padding-left: 4px; }
.llock { height: 30px; padding-left: 6px; }
.s-kind {
  margin-left: 4px;
  width: 90px;
  height: 17px;
  display: flex;
  align-items: center;
  gap: 3px;
  padding-left: 5px;
  color: #8a8a8a;
  background: #dcdcdc;
  border-color: #aaa;
}
.k-ic { flex: none; }
.k1 { margin-left: 10px; }
.k2 { margin-left: 10px; }
.k-t {
  margin-left: 11px;
  width: 11px;
  font: 700 14px/14px "Liberation Serif", serif;
  color: #777;
  text-align: center;
}
.k4 { margin-left: 11px; }
.k5 { margin-left: 11px; }
.ktoggle {
  margin-left: 13px;
  width: 8px;
  height: 17px;
  display: flex;
  flex-direction: column;
  gap: 1px;
}
.ktoggle i { flex: 1; background: #b4b4b4; border: 1px solid #a8a8a8; box-sizing: border-box; }
.s-normal {
  width: 129px;
  color: #8a8a8a;
  background: #dcdcdc;
  border-color: #aaa;
}
.l-op { margin-left: 8px; width: 41px; }
.numfield {
  position: relative;
  width: 54px;
  height: 18px;
  line-height: 16px;
  box-sizing: border-box;
  border: 1px solid #aaa;
  border-radius: 2px;
  background: linear-gradient(to right, #f2f2f2 0 34px, #aaa 34px 35px, #e0e0e0 35px);
  padding-left: 4px;
  color: #444;
  flex: none;
}
.numfield i {
  position: absolute;
  right: 5px;
  top: 6px;
  border: 3px solid transparent;
  border-top: 3px solid #555;
  border-bottom: 0;
}
.l-lock { width: 27px; }
.lk1 { margin-left: 5px; }
.lk2 { margin-left: 7px; }
.lk3 { margin-left: 7.500px; }
.lk4 { margin-left: 10.500px; }
.l-fill { margin-left: 47px; width: 19px; }
.layerlist { flex: 1; display: flex; min-height: 0; background: #c6c6c6; }
.layers { flex: 1; min-width: 0; }
.layer {
  display: flex;
  height: 40px;
  border-bottom: 1px solid #a0a0a0;
  box-sizing: border-box;
}
.eye {
  width: 31px;
  display: flex;
  align-items: center;
  justify-content: center;
  background: #d6d6d6;
  border-right: 1px solid #a0a0a0;
  box-sizing: border-box;
  flex: none;
}
.layersel {
  flex: 1;
  background: #b5cbf7;
  display: flex;
  align-items: center;
  padding-left: 3px;
}
.thumbl {
  width: 24px;
  height: 32px;
  box-sizing: border-box;
  background: #fff;
  border: 1px solid #222;
  flex: none;
}
.layersel em { margin-left: 10px; font-size: 10.300px; font-style: italic; color: #111; }
.layerlock { margin-left: auto; margin-right: 17px; }
.lscroll {
  width: 13px;
  flex: none;
  background: linear-gradient(to right, #c8c8c8, #f0f0f0 50%, #e6e6e6);
}
.lfoot {
  height: 20px;
  border-top: 2px solid #a8a8a8;
  box-sizing: border-box;
  padding-left: 36px;
  gap: 13.500px;
}
.fx {
  width: 13px;
  font: italic 400 14px/16px "Liberation Serif", serif;
  color: #8a8a8a;
  text-align: center;
}
</style>

<style>
html, body { margin: 0; padding: 0; overflow: hidden; background: #d6d6d6; }
</style>
